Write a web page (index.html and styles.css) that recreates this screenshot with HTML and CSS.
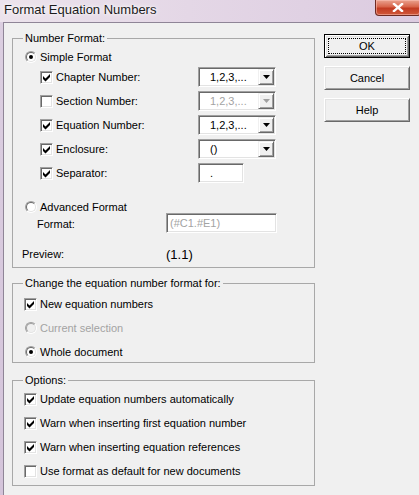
FILE: index.html
```html
<!DOCTYPE html>
<html>
<head>
<meta charset="utf-8">
<title>Format Equation Numbers</title>
<link rel="stylesheet" href="styles.css">
</head>
<body>
<div class="window">
  <div class="titlebar">
    <span class="title">Format Equation Numbers</span>
    <span class="close"><svg width="12" height="9" viewBox="0 0 12 9"><path d="M2 1 L10 8 M10 1 L2 8" stroke="#fff" stroke-width="2.4" stroke-linecap="square"/></svg></span>
  </div>
  <div class="client">
    <div class="main">
      <fieldset class="group g1">
        <legend>Number Format:</legend>
        <div class="g1-body">
          <div class="row r-simple"><span class="rb"><span class="rb-in"><span class="dot"></span></span></span><span>Simple Format</span></div>
          <div class="row r-opt">
            <span class="lbl"><span class="cb"><svg viewBox="1 1 11 11"><polygon points="3,5 5.5,7.5 10,3 10,6 5.5,10.5 3,8"/></svg></span>Chapter Number:</span>
            <span class="combo"><span class="value">1,2,3,...</span><span class="arrow"><svg width="7" height="4" viewBox="0 0 7 4"><polygon points="0,0 7,0 3.5,4"/></svg></span></span>
          </div>
          <div class="row r-opt">
            <span class="lbl"><span class="cb"></span>Section Number:</span>
            <span class="combo disabled"><span class="value">1,2,3,...</span><span class="arrow"><svg width="7" height="4" viewBox="0 0 7 4"><polygon points="0,0 7,0 3.5,4"/></svg></span></span>
          </div>
          <div class="row r-opt">
            <span class="lbl"><span class="cb"><svg viewBox="1 1 11 11"><polygon points="3,5 5.5,7.5 10,3 10,6 5.5,10.5 3,8"/></svg></span>Equation Number:</span>
            <span class="combo"><span class="value">1,2,3,...</span><span class="arrow"><svg width="7" height="4" viewBox="0 0 7 4"><polygon points="0,0 7,0 3.5,4"/></svg></span></span>
          </div>
          <div class="row r-opt">
            <span class="lbl"><span class="cb"><svg viewBox="1 1 11 11"><polygon points="3,5 5.5,7.5 10,3 10,6 5.5,10.5 3,8"/></svg></span>Enclosure:</span>
            <span class="combo"><span class="value">()</span><span class="arrow"><svg width="7" height="4" viewBox="0 0 7 4"><polygon points="0,0 7,0 3.5,4"/></svg></span></span>
          </div>
          <div class="row r-opt">
            <span class="lbl"><span class="cb"><svg viewBox="1 1 11 11"><polygon points="3,5 5.5,7.5 10,3 10,6 5.5,10.5 3,8"/></svg></span>Separator:</span>
            <span class="edit sep">.</span>
          </div>
          <div class="row r-adv"><span class="rb"><span class="rb-in"></span></span><span>Advanced Format</span></div>
          <div class="row r-format">
            <span class="lbl">Format:</span>
            <span class="edit fmt">(#C1.#E1)</span>
          </div>
          <div class="row r-preview">
            <span class="lbl">Preview:</span>
            <span class="preview">(1.1)</span>
          </div>
        </div>
      </fieldset>

      <fieldset class="group g2">
        <legend>Change the equation number format for:</legend>
        <div class="list g2-body">
          <div class="row item"><span class="cb"><svg viewBox="1 1 11 11"><polygon points="3,5 5.5,7.5 10,3 10,6 5.5,10.5 3,8"/></svg></span><span>New equation numbers</span></div>
          <div class="row item disabled"><span class="rb"><span class="rb-in"></span></span><span>Current selection</span></div>
          <div class="row item"><span class="rb"><span class="rb-in"><span class="dot"></span></span></span><span>Whole document</span></div>
        </div>
      </fieldset>

      <fieldset class="group g3">
        <legend>Options:</legend>
        <div class="list g3-body">
          <div class="row item"><span class="cb"><svg viewBox="1 1 11 11"><polygon points="3,5 5.5,7.5 10,3 10,6 5.5,10.5 3,8"/></svg></span><span>Update equation numbers automatically</span></div>
          <div class="row item"><span class="cb"><svg viewBox="1 1 11 11"><polygon points="3,5 5.5,7.5 10,3 10,6 5.5,10.5 3,8"/></svg></span><span>Warn when inserting first equation number</span></div>
          <div class="row item"><span class="cb"><svg viewBox="1 1 11 11"><polygon points="3,5 5.5,7.5 10,3 10,6 5.5,10.5 3,8"/></svg></span><span>Warn when inserting equation references</span></div>
          <div class="row item"><span class="cb"></span><span>Use format as default for new documents</span></div>
        </div>
      </fieldset>
    </div>

    <div class="buttons">
      <div class="btn default"><span class="focus">OK</span></div>
      <div class="btn">Cancel</div>
      <div class="btn">Help</div>
    </div>
  </div>
</div>
</body>
</html>
```

FILE: styles.css
```css
* { box-sizing: border-box; }

body {
  margin: 0;
  background: #dacbdf;
  font-family: "Liberation Sans", Arial, sans-serif;
  font-size: 11px;
  color: #000;
}

.window {
  width: 419px;
  height: 495px;
  display: flex;
  flex-direction: column;
  overflow: hidden;
  background: linear-gradient(180deg, #dccfe1, #d4c4da);
}

.titlebar {
  height: 22px;
  flex: none;
  display: flex;
  justify-content: space-between;
  align-items: flex-start;
  background: linear-gradient(90deg, #ece3ec 0%, #e4d7e6 45%, #dccbe0 100%);
}

.title {
  font-size: 13px;
  line-height: 20px;
  padding-left: 4px;
  color: #1b1b1b;
  text-shadow: 0 0 6px #fff, 0 0 3px #fff;
}

.close {
  width: 46px;
  height: 16px;
  margin-right: -2px;
  border: 1px solid #6e2a22;
  border-top: none;
  border-radius: 0 0 4px 4px;
  background: linear-gradient(180deg, #eaa390 0%, #d8644a 45%, #c23b22 55%, #d0583b 100%);
  display: flex;
  align-items: center;
  justify-content: center;
  box-shadow: inset 0 0 0 1px rgba(255, 200, 190, 0.5);
}

.close svg { display: block; }

.client {
  flex: 1;
  margin-left: 3px;
  border-left: 1px solid #8f8597;
  border-top: 1px solid #8f8597;
  background: #f0f0f0;
  display: flex;
  align-items: flex-start;
}

.main {
  padding-left: 8px;
  width: 311px;
  flex: none;
}

.group {
  margin: 0;
  padding: 0;
  border: 1px solid #a8a8a8;
  min-width: 0;
  width: 303px;
}

.group legend {
  padding: 0 2px;
  margin-left: 10px;
  line-height: 14px;
  height: 14px;
}

.g1 { margin-top: 8px; }
.g2 { margin-top: 8px; }
.g3 { margin-top: 10px; }

.row {
  display: flex;
  align-items: center;
  white-space: nowrap;
}

.g1-body {
  display: flex;
  flex-direction: column;
  padding: 0 0 3px 11px;
}

.r-simple { height: 16px; margin-top: 4px; }

.r-opt { height: 24px; padding-left: 16px; }

.r-opt .lbl {
  width: 158px;
  display: flex;
  align-items: center;
}

.r-adv { height: 13px; margin-top: 15px; }

.r-format { height: 20px; padding-left: 13px; }
.r-format .lbl { width: 129px; padding-top: 2px; }

.r-preview { height: 20px; margin-top: 11px; margin-left: -2px; }
.r-preview .lbl { width: 144px; }

.preview { font-size: 13px; }

.list {
  display: flex;
  flex-direction: column;
  gap: 4px;
}

.g2-body { padding: 4px 0 0 11px; }
.g3-body { padding: 2px 0 4px 11px; }

.item { height: 20px; }

.disabled { color: #a3a3a3; }

/* checkbox */
.cb {
  width: 13px;
  height: 13px;
  flex: none;
  border: 1px solid;
  border-color: #a0a0a0 #fff #fff #a0a0a0;
  background: #fff;
  box-shadow: inset 1px 1px #696969, inset -1px -1px #e3e3e3;
  margin-right: 3px;
}

.cb svg {
  display: block;
  width: 11px;
  height: 11px;
  fill: #000;
}

/* radio */
.rb {
  width: 12px;
  height: 12px;
  flex: none;
  border-radius: 50%;
  border: 1px solid;
  border-color: #a0a0a0 #fff #fff #a0a0a0;
  margin-left: 1px;
  margin-right: 3px;
}

.rb-in {
  display: flex;
  align-items: center;
  justify-content: center;
  width: 10px;
  height: 10px;
  border-radius: 50%;
  border: 1px solid;
  border-color: #696969 #e3e3e3 #e3e3e3 #696969;
  background: #fff;
}

.disabled .rb-in { background: #f0f0f0; border-color: #a0a0a0 #e3e3e3 #e3e3e3 #a0a0a0; }

.dot {
  width: 4px;
  height: 4px;
  border-radius: 50%;
  background: #000;
}

/* combo box */
.combo {
  width: 78px;
  height: 20px;
  flex: none;
  display: flex;
  padding: 1px;
  border: 1px solid;
  border-color: #a0a0a0 #fff #fff #a0a0a0;
  box-shadow: inset 1px 1px #696969, inset -1px -1px #e3e3e3;
  background: #fff;
}

.combo .value {
  flex: 1;
  padding-left: 10px;
  line-height: 16px;
}

.combo .arrow {
  width: 16px;
  height: 16px;
  flex: none;
  display: flex;
  align-items: center;
  justify-content: center;
  border: 1px solid;
  border-color: #f0f0f0 #696969 #696969 #f0f0f0;
  box-shadow: inset 1px 1px #fff, inset -1px -1px #a0a0a0;
  background: #f0f0f0;
}

.combo .arrow svg { display: block; fill: #000; }

.combo.disabled .value { color: #a3a3a3; }
.combo.disabled .arrow svg { fill: #a0a0a0; }

/* edit */
.edit {
  height: 20px;
  flex: none;
  display: flex;
  align-items: center;
  border: 1px solid;
  border-color: #a0a0a0 #fff #fff #a0a0a0;
  box-shadow: inset 1px 1px #696969, inset -1px -1px #e3e3e3;
  background: #fff;
}

.edit.sep { width: 46px; padding-left: 11px; }

.edit.fmt { width: 111px; padding-left: 3px; color: #a3a3a3; }

/* buttons */
.buttons {
  margin-left: 9px;
  padding-top: 11px;
  display: flex;
  flex-direction: column;
  gap: 8px;
}

.btn {
  width: 86px;
  height: 24px;
  display: flex;
  align-items: center;
  justify-content: center;
  border: 1px solid;
  border-color: #fff #696969 #696969 #fff;
  box-shadow: inset 1px 1px #e3e3e3, inset -1px -1px #a0a0a0;
  background: #f0f0f0;
}

.btn.default {
  border-color: #000;
  padding: 3px;
  box-shadow: inset 1px 1px #fff, inset -1px -1px #696969, inset 2px 2px #e3e3e3, inset -2px -2px #a0a0a0;
}

.focus {
  flex: 1;
  align-self: stretch;
  display: flex;
  align-items: center;
  justify-content: center;
  border: 1px dotted #000;
}
```
